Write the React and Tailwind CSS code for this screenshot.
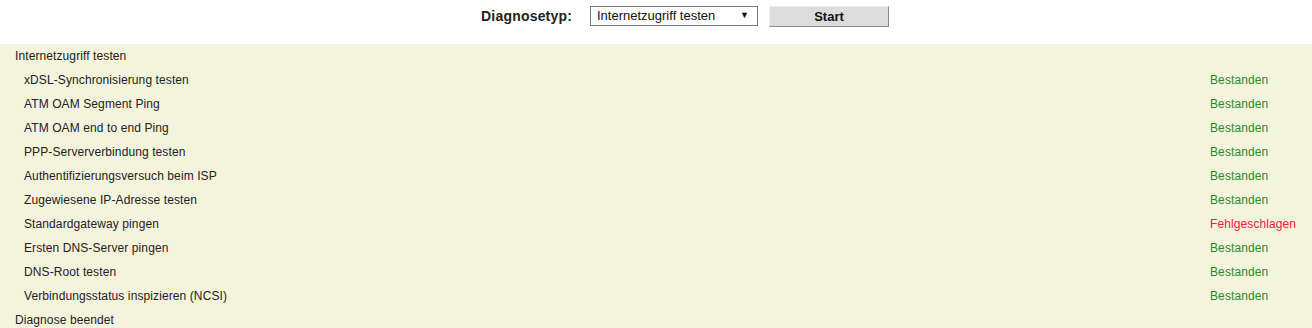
export default function App() {
  const rows = [
    ["xDSL-Synchronisierung testen", true],
    ["ATM OAM Segment Ping", true],
    ["ATM OAM end to end Ping", true],
    ["PPP-Serververbindung testen", true],
    ["Authentifizierungsversuch beim ISP", true],
    ["Zugewiesene IP-Adresse testen", true],
    ["Standardgateway pingen", false],
    ["Ersten DNS-Server pingen", true],
    ["DNS-Root testen", true],
    ["Verbindungsstatus inspizieren (NCSI)", true],
  ];
  return (
    <div className="w-[1312px] h-[328px] bg-white overflow-hidden text-[#222]" style={{ fontFamily: '"Liberation Sans", Arial, sans-serif' }}>
      <div className="h-[44px] flex items-start pt-[6px] pl-[481px]">
        <span className="text-[14px] font-bold leading-[20px] w-[109px] tracking-[0.2px]">Diagnosetyp:</span>
        <div className="w-[168px] h-[20px] border border-[#7a7a7a] bg-white flex items-center justify-between pl-[6px] pr-[8px] text-[13px] text-[#111]">
          <span>Internetzugriff testen</span>
          <span className="text-[9px]">▼</span>
        </div>
        <div className="ml-[11px] w-[120px] h-[21px] bg-[#dcdcdc] border-t border-l border-[#eeeeee] border-r border-b border-r-[#8c8c8c] border-b-[#8c8c8c] flex items-center justify-center text-[13px] font-bold text-[#111]">
          Start
        </div>
      </div>
      <div className="bg-[#f4f3dc] text-[12px] tracking-[0.1px]">
        <div className="h-[24px] flex items-center pl-[15px]">Internetzugriff testen</div>
        {rows.map(([name, ok]) => (
          <div key={name} className="h-[24px] grid grid-cols-[1fr_102px] items-center">
            <span className="pl-[24px]">{name}</span>
            <span className={ok ? "text-[#2a8a2a]" : "text-[#f02040]"}>{ok ? "Bestanden" : "Fehlgeschlagen"}</span>
          </div>
        ))}
        <div className="h-[24px] flex items-center pl-[15px]">Diagnose beendet</div>
      </div>
    </div>
  );
}
